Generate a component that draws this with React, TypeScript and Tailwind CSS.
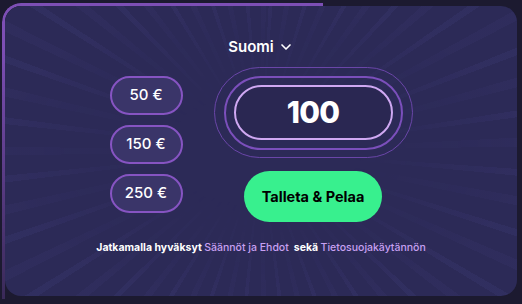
import { ChevronDown } from "lucide-react";

const presets = ["50 €", "150 €", "250 €"];

const App = () => {
  return (
    <div className="w-[522px] h-[304px] bg-[#1c1a30] pt-[6px] pl-[5px] overflow-hidden" style={{ fontFamily: "Inter, 'Noto Sans', sans-serif" }}>
      <div className="relative w-[512px] h-[290px]">
        {/* progress edge */}
        <div className="absolute -left-[3px] -top-[3px] w-[321px] h-[296px] rounded-tl-[19px] border-t-[3px] border-l-[3px] border-[#7d4fb5] [mask-image:linear-gradient(to_bottom,black_15%,rgba(0,0,0,0.3)_100%)]" />
        <div className="relative w-full h-full rounded-[16px] bg-[#2c2a57] overflow-hidden">
          {/* rays */}
          <div className="absolute inset-0 bg-[repeating-conic-gradient(from_3deg_at_50%_50%,rgba(120,110,220,0.07)_0deg_1.5deg,transparent_1.5deg_6deg,rgba(120,110,220,0.045)_6deg_8deg,transparent_8deg_13deg)] [mask-image:radial-gradient(ellipse_at_center,transparent_25%,black_75%)]" />

          <div className="relative flex flex-col items-center pt-[31px]">
            <button className="flex items-center gap-[4px] h-[20px] text-[15px] font-semibold text-white">
              Suomi
              <ChevronDown size={16} strokeWidth={2.5} />
            </button>

            <div className="mt-[10px] flex items-center gap-[31px]">
              <div className="flex flex-col gap-[10px]">
                {presets.map((p) => (
                  <button
                    key={p}
                    className="w-[73px] h-[39px] rounded-full border-2 border-[#8654c2] bg-[#3a3569] text-white text-[15px] font-medium"
                  >
                    {p}
                  </button>
                ))}
              </div>

              <div className="flex flex-col items-center">
                <div className="w-[199px] h-[91px] rounded-full border border-[#6a46a8] flex items-center justify-center">
                  <div className="w-[179px] h-[74px] rounded-full border-2 border-[#7b4fbb] flex items-center justify-center">
                    <div className="w-[159px] h-[55px] rounded-full border-2 border-[#cfa8f2] bg-[#2a2752] flex items-center justify-center text-white text-[30px] font-extrabold tracking-tight">
                      100
                    </div>
                  </div>
                </div>
                <button className="mt-[13px] w-[138px] h-[51px] rounded-full bg-[#38f08e] text-black text-[14.5px] font-bold">
                  Talleta &amp; Pelaa
                </button>
              </div>
            </div>

            <p className="mt-[18px] text-[10.5px] leading-[16px] text-white font-bold whitespace-pre">
              Jatkamalla hyväksyt <span className="text-[#c8a0f2] font-medium">Säännöt ja Ehdot</span>  sekä <span className="text-[#c8a0f2] font-medium">Tietosuojakäytännön</span>
            </p>
          </div>
        </div>
      </div>
    </div>
  );
};

export default App;
